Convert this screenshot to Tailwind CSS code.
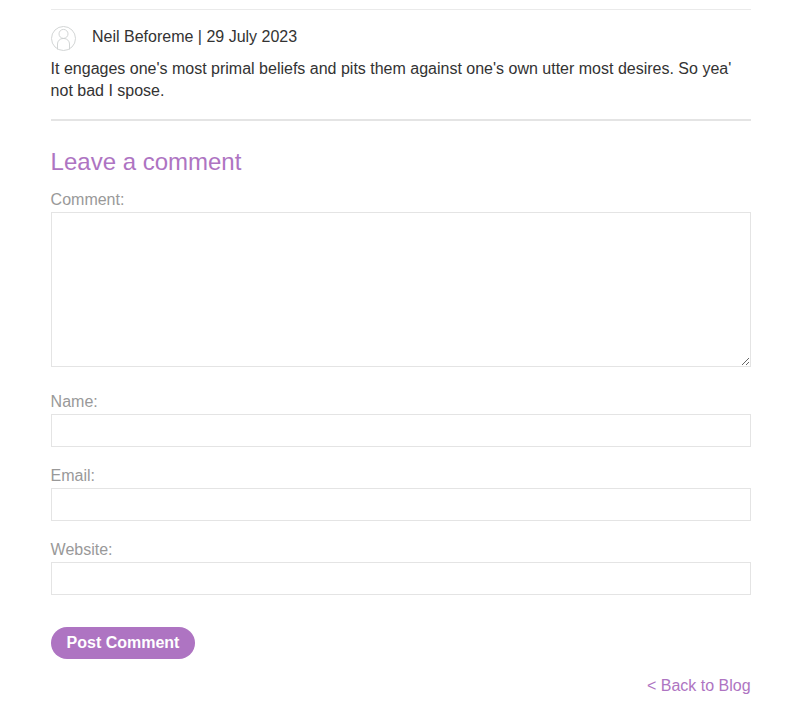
<!DOCTYPE html>
<html lang="en">
<head>
<meta charset="utf-8">
<title>Leave a comment</title>
<script src="https://cdn.jsdelivr.net/npm/@tailwindcss/browser@4"></script>
</head>
<body class="bg-white font-['Liberation_Sans',Arial,sans-serif] text-base text-[#333]">
<main class="ml-[50.6px] w-[700px] pt-[9px]">
  <article class="h-28 border-t border-b-2 border-t-[#eaeaea] border-b-[#e4e4e4] pt-4">
    <header class="flex h-[26px] gap-[16.4px]">
      <svg class="size-[25px] shrink-0" viewBox="0 0 25 25" fill="none" stroke="#cdd0d0" stroke-width=".9"><circle cx="12.5" cy="12.5" r="12"/><circle cx="12.5" cy="7.900" r="4.500"/><path d="M6.500 23.500V18a5.500 5.500 0 0 1 5.500-5.500h1a5.500 5.500 0 0 1 5.500 5.500V23.500"/></svg>
      <p class="leading-[22px]">Neil Beforeme | 29 July 2023</p>
    </header>
    <p class="mt-[6px] leading-[22px]">It engages one's most primal beliefs and pits them against one's own utter most desires. So yea' not bad I spose.</p>
  </article>
  <form class="flex flex-col text-[#999]">
    <h2 class="mt-[25px] h-[43px] text-2xl leading-[32px] text-[#ae74c2]">Leave a comment</h2>
    <label for="comment" class="h-[23px] leading-[22px]">Comment:</label>
    <textarea id="comment" class="h-[155px] w-full border border-[#e4e4e4] outline-none"></textarea>
    <label for="name" class="mt-6 h-[23px] leading-[22px]">Name:</label>
    <input id="name" class="h-[33px] border border-[#e4e4e4]">
    <label for="email" class="mt-[18px] h-[23px] leading-[22px]">Email:</label>
    <input id="email" class="h-[33px] border border-[#e4e4e4]">
    <label for="website" class="mt-[18px] h-[23px] leading-[22px]">Website:</label>
    <input id="website" class="h-[33px] border border-[#e4e4e4]">
    <button type="button" class="mt-8 h-8 w-36 rounded-full bg-[#ae74c2] pl-[0.8px] font-bold text-white">Post Comment</button>
  </form>
  <p class="mt-4 text-right leading-[22px]"><a class="text-[#ae74c2]">&lt; Back to Blog</a></p>
</main>
</body>
</html>
